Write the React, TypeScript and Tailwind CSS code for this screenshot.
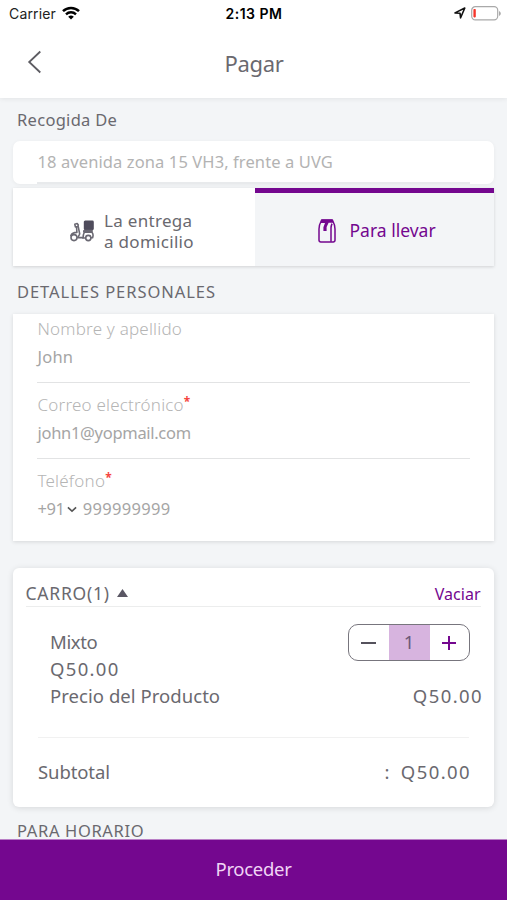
import { useState } from "react";

type Field = {
  label: string;
  value: string;
  required: boolean;
  prefix?: string;
  valueSpacing: string;
};

const FIELDS: Field[] = [
  {
    label: "Nombre y apellido",
    value: "John",
    required: false,
    valueSpacing: "tracking-[0.2px]",
  },
  {
    label: "Correo electrónico",
    value: "john1@yopmail.com",
    required: true,
    valueSpacing: "tracking-[-0.3px]",
  },
  {
    label: "Teléfono",
    value: "999999999",
    required: true,
    prefix: "+91",
    valueSpacing: "tracking-[0.3px]",
  },
];

function StatusBar() {
  return (
    <div className="grid h-[28px] grid-cols-3 items-center pl-[9px] pr-[6px] pb-[2px] font-['Inter',sans-serif] text-[14px] text-black">
      <div className="flex items-center gap-[6px]">
        <span className="tracking-[0.15px] text-[#222]">Carrier</span>
        <svg width="18" height="14" viewBox="0 0 18 14" fill="none" stroke="#000">
          <path d="M1 5.2a11.4 11.4 0 0 1 16 0" strokeWidth="2.5" />
          <path d="M4 8.3a7.2 7.2 0 0 1 10 0" strokeWidth="2.4" />
          <path d="M9 13.6 6.2 10.8a4 4 0 0 1 5.6 0z" fill="#000" stroke="none" />
        </svg>
      </div>
      <span className="-ml-[2px] text-center font-semibold tracking-[0.5px]">2:13 PM</span>
      <div className="flex items-center justify-end gap-[5px]">
        <svg width="12" height="12" viewBox="0 0 12 12" fill="none" stroke="#111" strokeWidth="1.6" strokeLinejoin="round">
          <path d="M1 5.900 10.800 1 6.600 10.800 6 6.200z" />
        </svg>
        <svg width="30" height="15" viewBox="0 0 30 15" fill="none">
          <rect x="0.7" y="0.7" width="26" height="13.2" rx="3.6" stroke="#a9a9a9" strokeWidth="1.2" />
          <rect x="2.4" y="3" width="2.4" height="8.4" rx="0.8" fill="#f5352b" />
          <path d="M28 5v5c1-.4 1.8-1.3 1.8-2.5S29 5.400 28 5z" fill="#a9a9a9" />
        </svg>
      </div>
    </div>
  );
}

function ScooterIcon() {
  return (
    <svg width="25" height="22" viewBox="0 0 25 22" fill="none" stroke="#6b6973" strokeWidth="1.6" strokeLinecap="round" strokeLinejoin="round">
      <rect x="14.600" y="1.400" width="8.400" height="8" rx="0.6" fill="#4f4c5c" stroke="#4f4c5c" />
      <circle cx="4" cy="17.600" r="3" />
      <circle cx="18.300" cy="18" r="2.600" />
      <path d="M4.800 4.300 7.200 3.500l1.100 1.400-.6 1.800-2.300.2z" />
      <path d="M8.300 6.800 9.700 14l-1.900 3.600h5.400c0-2.200.2-3.700 1-5" />
      <path d="M6.600 7.600 6.900 12.400C3.500 12.400 1.600 13.800.9 15.600M12.800 18h2.600M21.200 17.800h1.400c.8-2.400.4-4.400-.6-5.600h-7.600c-.8-.4-.9-1.200 0-1.600h7.600v1.600" />
    </svg>
  );
}

function BagIcon() {
  return (
    <svg width="18" height="24" viewBox="0 0 18 24" fill="none" stroke="#74078f" strokeWidth="1.5" strokeLinejoin="round">
      <path d="M3.600 1h10.800c1.600 3 2.600 6 2.600 9v11.200a1.700 1.700 0 0 1-1.700 1.700H2.700A1.700 1.700 0 0 1 1 21.200V10c0-3 1-6 2.600-9z" />
      <path d="M13 22.800V9c0-1.600.4-3 1-4.400" />
      <path d="M3.600.6h10.800l1.200 3.200H10.600L8.600 8v4H5.400V8.200L7 4H2.600z" fill="#74078f" stroke="none" />
    </svg>
  );
}

function FieldRow({ field, last }: { field: Field; last: boolean }) {
  return (
    <div
      className={`h-[76px] pt-[8px] text-[17px] leading-[28px] ${
        last ? "" : "border-b-[1.5px] border-[#e2e3e4]"
      }`}
    >
      <div className="flex pl-[0.5px] font-light tracking-[0.2px] text-[#b5b5b5]">
        <span>{field.label}</span>
        {field.required && (
          <span className="-mt-[3px] text-[12px] font-bold text-[#f5453f]">*</span>
        )}
      </div>
      <div className="flex items-center pl-[0.5px] text-[16.5px] text-[#a5a5a5]">
        {field.prefix && (
          <>
            <span className="tracking-[-0.5px]">{field.prefix}</span>
            <svg width="10" height="7" viewBox="0 0 11 7" fill="none" stroke="#555" strokeWidth="1.8" className="ml-[3px] mr-[5.5px]">
              <path d="M1 1.200 5.500 5.300 10 1.200" />
            </svg>
          </>
        )}
        <span className={field.valueSpacing}>{field.value}</span>
      </div>
    </div>
  );
}

function Stepper() {
  const [qty, setQty] = useState(1);

  return (
    <div className="flex h-[37px] w-[122px] overflow-hidden rounded-[10px] border-[1.5px] border-[#77757d]">
      <button
        onClick={() => setQty(Math.max(0, qty - 1))}
        className="flex flex-1 items-center justify-center"
        aria-label="Menos"
      >
        <span className="h-[2px] w-[15px] bg-[#55525c]" />
      </button>
      <span className="flex w-[41px] items-center justify-center bg-[#d7b4df] pb-[2px] text-[18.5px] text-[#6c5a78]">
        {qty}
      </span>
      <button
        onClick={() => setQty(qty + 1)}
        className="flex flex-1 items-center justify-center"
        aria-label="Más"
      >
        <svg width="14" height="14" viewBox="0 0 14 14" stroke="#74078f" strokeWidth="2">
          <path d="M7 0v14M0 7h14" />
        </svg>
      </button>
    </div>
  );
}

export default function App() {
  return (
    <div className="flex h-[900px] w-[507px] flex-col overflow-hidden bg-[#f3f5f7] font-['Noto_Sans',sans-serif] text-[#6a696f]">
      <header className="z-10 h-[98px] shrink-0 bg-white shadow-[0_1px_5px_rgba(0,0,0,0.07)]">
        <StatusBar />
        <div className="grid h-[70px] grid-cols-[1fr_auto_1fr] items-center pl-[27px] pr-[27px]">
          <svg width="15" height="24" viewBox="0 0 15 24" fill="none" stroke="#5d5c62" strokeWidth="1.8" className="-mt-[2px]">
            <path d="M13.300 1.500 2.200 12l11.100 10.500" />
          </svg>
          <h1 className="-mt-[1px] ml-[1px] text-[22px] leading-[30px] tracking-[-0.35px]">Pagar</h1>
        </div>
      </header>

      <main className="min-h-0 flex-1 overflow-hidden px-[13px]">
        <h2 className="h-[43px] pl-[4px] text-[16.5px] leading-[43px] tracking-[0.3px]">Recogida De</h2>
        <div className="h-[43px] rounded-[7px] bg-white px-[24px] shadow-[0_1px_4px_rgba(0,0,0,0.05)]">
          <p className="h-full border-b-2 border-[#e8eaec] pl-[0.5px] text-[16.5px] leading-[41px] tracking-[0.1px] text-[#b3b3b3]">
            18 avenida zona 15 VH3, frente a UVG
          </p>
        </div>

        <div className="mt-[4px] flex h-[78px] shadow-[0_1px_3px_rgba(0,0,0,0.14)]">
          <button className="flex w-[242px] items-center bg-white pl-[57px] pt-[8px] text-left">
            <ScooterIcon />
            <span className="ml-[9px] text-[17px] leading-[21px] tracking-[0.3px]">
              La entrega
              <br />a domicilio
            </span>
          </button>
          <button className="flex flex-1 items-center border-t-[5px] border-[#74078f] bg-[#f3f5f7] pl-[63px] pt-[2px] text-[#74078f]">
            <BagIcon />
            <span className="ml-[13.5px] text-[17.5px]">Para llevar</span>
          </button>
        </div>

        <h2 className="h-[48px] pl-[4px] text-[16.5px] leading-[51px] tracking-[0.95px]">DETALLES PERSONALES</h2>
        <div className="flex h-[227px] flex-col bg-white px-[24px] shadow-[0_1px_4px_rgba(0,0,0,0.12)]">
          <div className="-mt-[7px]">
            {FIELDS.map((f, i) => (
              <FieldRow key={f.label} field={f} last={i === FIELDS.length - 1} />
            ))}
          </div>
        </div>

        <section className="mt-[27px] h-[239px] rounded-[6px] bg-white shadow-[0_1px_6px_rgba(0,0,0,0.12)]">
          <div className="ml-[12.5px] mr-[13.5px] flex h-[39px] items-center justify-between border-b border-[#eceded] pt-[12px]">
            <div className="flex items-center">
              <span className="text-[17.5px] tracking-[0.75px]">CARRO(1)</span>
              <svg width="11" height="8" viewBox="0 0 11 8" fill="#5a5764" className="ml-[7px]">
                <path d="M5.500 0 11 8H0z" />
              </svg>
            </div>
            <button className="mt-[1px] text-[16px] text-[#74078f]">Vaciar</button>
          </div>

          <div className="flex h-[98px] justify-between pl-[37px] pr-[12px] pt-[21px] text-[18.5px] leading-[27px]">
            <div>
              <p className="tracking-[-0.4px]">Mixto</p>
              <p className="tracking-[1.3px]">Q50.00</p>
              <p className="tracking-[0.05px]">Precio del Producto</p>
            </div>
            <div className="flex flex-col items-end">
              <div className="-mt-[4px] mr-[12px]">
                <Stepper />
              </div>
              <p className="-mr-[1px] mt-[21px] tracking-[1.4px]">Q50.00</p>
            </div>
          </div>

          <div className="mx-[25px] mt-[32px] flex h-[69px] items-center justify-between border-t border-[#f1f1f1] pb-[1px] text-[18.5px]">
            <span className="tracking-[-0.1px]">Subtotal</span>
            <span className="-mr-[2px] flex">
              <span className="mr-[11.5px]">:</span>
              <span className="tracking-[1.4px]">Q50.00</span>
            </span>
          </div>
        </section>

        <h2 className="mt-[15px] pl-[4px] text-[16.5px] leading-[17px] tracking-[0.65px]">PARA HORARIO</h2>
      </main>

      <button className="h-[61px] shrink-0 border-t border-[#b97fc6] bg-[#74078f] pb-[3px] text-[18.5px] tracking-[-0.3px] text-[#f0d5f5]">
        Proceder
      </button>
    </div>
  );
}
